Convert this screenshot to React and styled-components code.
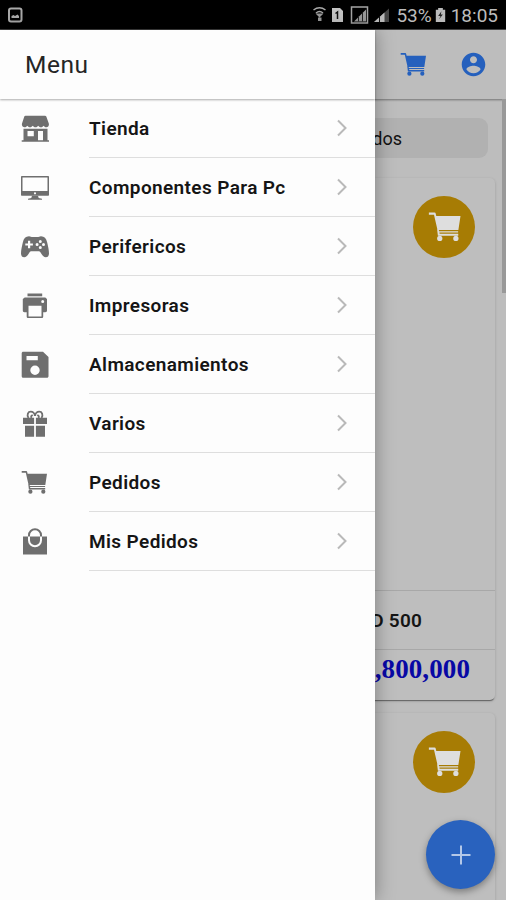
import React from 'react';

// Styled Components
import styled, { createGlobalStyle } from 'styled-components';

// Icons
import { IoMdContact } from 'react-icons/io';

const Icon = ({ size = 28, children }) => (
    <svg width={size} height={size} viewBox="0 0 28 28" fill="currentColor" fillRule="evenodd">
        {children}
    </svg>
);

const StoreIcon = () => (
    <Icon>
        <path d="M4.500.800h19.500c.6 0 1 .2 1.300.800l2.500 7c.5 2-.6 3.700-2.500 3.700-1.200 0-2.200-.6-2.700-1.500-.5.900-1.500 1.500-2.700 1.500s-2.200-.6-2.700-1.500c-.5.900-1.500 1.500-2.700 1.500s-2.300-.6-2.800-1.500c-.5.900-1.500 1.500-2.700 1.500s-2.200-.6-2.700-1.500c-.5.900-1.500 1.500-2.700 1.500C1.700 12.300.500 10.600 1 8.600l2.300-7c.2-.6.6-.8 1.200-.8z" />
        <path d="M2.500 13.800h24v11.400H28v1.600H.700v-1.600h1.800zM6.500 16v5.300h6.300V16zM17 16v9.200h5V16z" />
    </Icon>
);

const DesktopIcon = () => (
    <Icon>
        <path d="M1 2h26c.6 0 1 .4 1 1v17.700c0 .6-.4 1-1 1H1c-.6 0-1-.4-1-1V3c0-.6.400-1 1-1zM1.500 3.500v13.400h25V3.500zM14 18.200a1.100 1.100 0 1 0 0 2.200 1.100 1.100 0 0 0 0-2.200z" />
        <path d="M11 21.700h6l.7 2.300 3.300.7v1H7v-1l3.300-.7z" />
    </Icon>
);

const GamepadIcon = () => (
    <Icon>
        <path d="M8 3.300c1.500 0 2.300.8 3.500.8h5c1.200 0 2-.8 3.500-.8 3.300 0 5.300 2.200 6.200 6.200.9 3.900 1.800 8 1.800 11 0 2.200-1.200 3.800-3.200 3.800-2.300 0-3.800-2.300-5.400-5-.5-.8-1.100-1.100-2-1.100h-6.800c-.9 0-1.500.3-2 1.100-1.600 2.700-3.100 5-5.400 5-2 0-3.200-1.600-3.200-3.800 0-3 .9-7.100 1.800-11 .9-4 2.900-6.200 6.200-6.200zM7 7.700v2.700H4.300v2.200H7v2.700h2.200v-2.700h2.700v-2.200H9.200V7.700zM19.300 7a1.500 1.500 0 1 0 0 3 1.500 1.500 0 0 0 0-3zM16.100 10a1.500 1.500 0 1 0 0 3 1.500 1.500 0 0 0 0-3zM22.500 10a1.500 1.500 0 1 0 0 3 1.500 1.500 0 0 0 0-3zM19.300 13.100a1.500 1.500 0 1 0 0 3 1.500 1.500 0 0 0 0-3z" />
    </Icon>
);

const PrintIcon = () => (
    <Icon>
        <path d="M6.500 1.500h14.700v2.800H6.500z" />
        <path d="M3.700 5.400h20.600l1.700 1.700v11.400c0 1.100-.6 1.700-1.700 1.700h-2.100v4.300c0 1-.6 1.500-1.500 1.500H7.200c-.9 0-1.500-.5-1.500-1.500v-4.300H3.500c-1.100 0-1.700-.6-1.700-1.700V7.100zM7.500 13.700v10.700h13V13.700zM21.700 8a1.500 1.500 0 1 0 0 3 1.500 1.500 0 0 0 0-3z" />
    </Icon>
);

const SaveIcon = () => (
    <Icon>
        <path d="M2.200.800h19.800L27.500 6v19.300c0 .9-.6 1.500-1.500 1.500H2.200c-.9 0-1.500-.6-1.500-1.500V2.300c0-.9.600-1.500 1.500-1.500zM5.500 5v4.300h11.300V5zM14 14.500a4.700 4.700 0 1 0 0 9.400 4.700 4.700 0 0 0 0-9.400z" />
    </Icon>
);

const GiftIcon = () => (
    <Icon>
        <path d="M2 7.800h11.100v6.300H2zM14.900 7.800H26v6.300H14.900zM4 15.700h9.100v11H4zM14.900 15.700H24v11h-9.100z" />
        <path d="M7.500 8C5.500 4.500 7 1.700 9.800 1.700c2.500 0 3.700 1.800 4.200 4 .5-2.200 1.700-4 4.200-4 2.800 0 4.300 2.800 2.300 6.300M10.500 8c-1-2 .3-3 1.300-2.200M17.500 8c1-2-.3-3-1.300-2.200" fill="none" stroke="currentColor" strokeWidth="1.800" />
    </Icon>
);

const CartIcon = ({ size }) => (
    <Icon size={size}>
        <path d="M.700 2h4.500c.6 0 .9.300 1 .9l.4 1.800H26l-1.700 11.200H7.600L4.800 3.700H.700z" />
        <path d="M7.300 15.500h1.200l.4 1.500h15.200v.9H9.100l.2 1.100h14.900v1.600H7.900z" />
        <circle cx="9.400" cy="22.700" r="2.100" />
        <circle cx="22.300" cy="22.700" r="2.100" />
    </Icon>
);

const BagIcon = () => (
    <Icon>
        <path d="M2 8.500h24v18H2z" />
        <path d="M8 9V7.300a6 6 0 0 1 12 0V9" fill="none" stroke="currentColor" strokeWidth="2" />
        <path d="M8 8.500v3.700a6 6 0 0 0 12 0V8.500" fill="none" stroke="#fdfdfd" strokeWidth="2" />
    </Icon>
);

const items = [
    { label: 'Tienda', icon: <StoreIcon /> },
    { label: 'Componentes Para Pc', icon: <DesktopIcon /> },
    { label: 'Perifericos', icon: <GamepadIcon /> },
    { label: 'Impresoras', icon: <PrintIcon /> },
    { label: 'Almacenamientos', icon: <SaveIcon /> },
    { label: 'Varios', icon: <GiftIcon /> },
    { label: 'Pedidos', icon: <CartIcon /> },
    { label: 'Mis Pedidos', icon: <BagIcon /> },
];

const StatusBar = () => (
    <Status>
        <svg width="16" height="16" viewBox="0 0 16 16" fill="none">
            <rect x="2" y="1.500" width="12.500" height="13" rx="2" stroke="#aaa" strokeWidth="2" />
            <path d="M4.500 11V9l2-1L8 9l2.500-1.500L12 9v2z" fill="#aaa" />
        </svg>
        <StatusRight>
            <svg width="83" height="20" viewBox="0 0 83 20" fill="none">
                <path d="M.500 5c4-3 8-3 12 0M3 8c2.300-2 4.700-2 7 0" stroke="#aaa" strokeWidth="1.500" />
                <path d="M2.500 8.500h8l-4 4zM5 12.500h3.500v3.500H5z" fill="#999" />
                <path d="M19 3h8l3 3v11H19z" fill="#c4c4c4" />
                <path d="M22.500 8.500l2-1.500v7" stroke="#111" strokeWidth="1.500" />
                <path d="M38.500 2h16v16h-16z" stroke="#a5a5a5" strokeWidth="1.500" />
                <path d="M41 16.500L53 4.500v12z" fill="#999" />
                <path d="M45.500 11v5.500M49.500 8v8.500" stroke="#222" />
                <path d="M61 17L76 3.500V17z" fill="#454545" />
                <path d="M61 17l10.500-9.500V17z" fill="#bbb" />
                <path d="M66.500 11v6" stroke="#111" />
            </svg>
            <Battery>53%</Battery>
            <svg width="11" height="15" viewBox="0 0 11 16">
                <path d="M3 1h5v2h2.500v13H.500V3H3z" fill="#bbb" />
                <path d="M6.500 4.500L3 9.500h2.500L4 13l4-5H5.800z" fill="#222" />
            </svg>
            <Clock>18:05</Clock>
        </StatusRight>
    </Status>
);

const App = () => (
    <>
        <GlobalStyle />
        <Screen>
            <StatusBar />
            <Stage>
                <Toolbar>
                    <CartIcon />
                    <IoMdContact size={29} />
                </Toolbar>
                <Content>
                    <Segment>Todos</Segment>
                    <Card>
                        <Photo>
                            <CartBadge><CartIcon size={35} /></CartBadge>
                        </Photo>
                        <ProductName>SSD 500</ProductName>
                        <Price>$ 1,800,000</Price>
                    </Card>
                    <Card>
                        <Photo>
                            <CartBadge><CartIcon size={35} /></CartBadge>
                        </Photo>
                    </Card>
                    <Scrollbar />
                </Content>
                <Fab>
                    <svg width="20" height="20" viewBox="0 0 20 20">
                        <path d="M10 .500v19M.500 10h19" stroke="#b4c8e8" strokeWidth="2" />
                    </svg>
                </Fab>
                <Drawer>
                    <DrawerHeader>Menu</DrawerHeader>
                    {items.map(({ label, icon }) => (
                        <MenuItem key={label}>
                            <ItemIcon>{icon}</ItemIcon>
                            <ItemBody>
                                {label}
                                <svg width="12" height="18" viewBox="0 0 12 18" fill="none">
                                    <path d="M2 1.500L9.500 9 2 16.500" stroke="#b9b9b9" strokeWidth="2" />
                                </svg>
                            </ItemBody>
                        </MenuItem>
                    ))}
                </Drawer>
            </Stage>
        </Screen>
    </>
);

const GlobalStyle = createGlobalStyle`
  * {
    box-sizing: border-box;
  }

  body {
    margin: 0;
    font-family: Roboto, sans-serif;
  }

  svg {
    display: block;
    flex-shrink: 0;
  }
`;

const Screen = styled.div`
  display: flex;
  flex-direction: column;
  height: 900px;
  overflow: hidden;
`;

const Status = styled.div`
  display: flex;
  align-items: center;
  justify-content: space-between;
  flex-shrink: 0;
  height: 30px;
  padding: 0 8px 0 7px;
  background: #000;
  color: #bcbcbc;
  font-size: 19px;
  border-bottom: 1px solid #444;
`;

const StatusRight = styled.div`
  display: flex;
  align-items: center;
`;

const Battery = styled.div`
  margin-right: 3px;
  padding-top: 2px;
`;

const Clock = styled.div`
  margin-left: 5px;
  padding-top: 2px;
`;

const Stage = styled.div`
  position: relative;
  display: flex;
  flex-direction: column;
  flex: 1;
  min-height: 0;
  background: #bdbdbd;
`;

const Toolbar = styled.div`
  display: flex;
  align-items: center;
  justify-content: flex-end;
  gap: 31px;
  flex-shrink: 0;
  height: 69px;
  padding-right: 18px;
  color: #2560bd;
  box-shadow: 0 1px 2px rgba(0, 0, 0, 0.4);
`;

const Content = styled.div`
  position: relative;
  display: flex;
  flex-direction: column;
  flex: 1;
  min-height: 0;
  padding: 19px 11px 0;
  overflow: hidden;
`;

const Segment = styled.div`
  flex-shrink: 0;
  height: 40px;
  margin: 0 7px 20px;
  padding-right: 86px;
  border-radius: 9px;
  background: #b1b1b1;
  color: #111;
  font-size: 18px;
  line-height: 41px;
  text-align: right;
`;

const Card = styled.div`
  flex-shrink: 0;
  height: 522px;
  margin-bottom: 13px;
  border-radius: 5px;
  background: #bebebe;
  box-shadow: 0 1px 3px rgba(0, 0, 0, 0.18), 0 2px 1px -1px rgba(0, 0, 0, 0.4);
`;

const Photo = styled.div`
  display: flex;
  justify-content: flex-end;
  height: 413px;
  padding: 18px 20px 0;
  border-bottom: 1px solid #a8a8a8;
`;

const CartBadge = styled.div`
  display: flex;
  align-items: center;
  justify-content: center;
  width: 62px;
  height: 62px;
  padding-left: 2px;
  border-radius: 50%;
  background: #a77c04;
  color: #dedede;
`;

const ProductName = styled.div`
  height: 59px;
  padding-right: 73px;
  border-bottom: 1px solid #a8a8a8;
  color: #151515;
  font-size: 19px;
  font-weight: 600;
  letter-spacing: 0.2px;
  line-height: 59px;
  text-align: right;
`;

const Price = styled.div`
  padding-right: 25px;
  color: #0808a5;
  font-family: "Liberation Serif", serif;
  font-size: 27px;
  font-weight: 700;
  letter-spacing: 0.1px;
  line-height: 38px;
  text-align: right;
`;

const Scrollbar = styled.div`
  position: absolute;
  top: 0;
  right: 0;
  width: 4px;
  height: 194px;
  background: #999;
`;

const Fab = styled.div`
  position: absolute;
  right: 11px;
  bottom: 11px;
  display: flex;
  align-items: center;
  justify-content: center;
  width: 69px;
  height: 69px;
  border-radius: 50%;
  background: #2962be;
  box-shadow: 0 3px 7px rgba(0, 0, 0, 0.35);
`;

const Drawer = styled.div`
  position: absolute;
  top: 0;
  bottom: 0;
  left: 0;
  width: 375px;
  background: #fdfdfd;
  box-shadow: 0 0 18px rgba(0, 0, 0, 0.35);
`;

const DrawerHeader = styled.div`
  height: 69px;
  padding-left: 25px;
  color: #252525;
  font-size: 24.5px;
  letter-spacing: 0.5px;
  line-height: 69px;
  box-shadow: 0 1px 2px rgba(0, 0, 0, 0.32);
`;

const MenuItem = styled.div`
  display: flex;
  align-items: center;
  height: 59px;
  padding-left: 21px;
`;

const ItemIcon = styled.div`
  width: 68px;
  color: #6f6f6f;
`;

const ItemBody = styled.div`
  display: flex;
  align-items: center;
  justify-content: space-between;
  flex: 1;
  height: 100%;
  padding-right: 27px;
  border-bottom: 1px solid #dedede;
  color: #151515;
  font-size: 19px;
  font-weight: 600;
  letter-spacing: 0.38px;
`;

export default App;
